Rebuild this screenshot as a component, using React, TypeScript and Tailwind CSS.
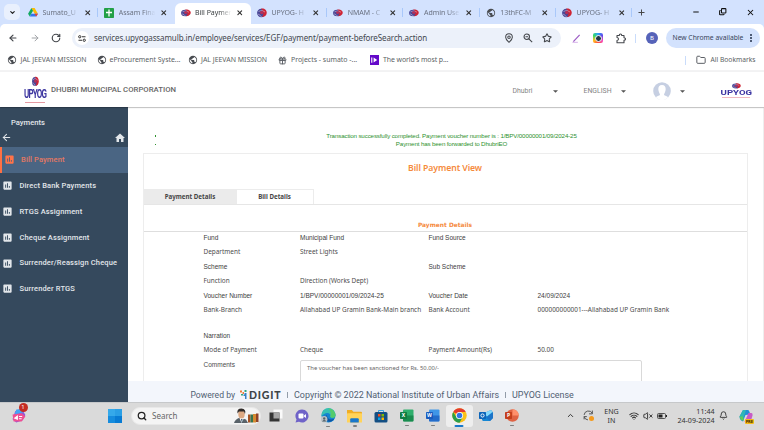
import React from 'react';
import {
  ArrowLeft, ArrowRight, RotateCw, ChevronDown, ChevronUp, X, Plus, Minus, Copy, Star, MapPin, ZoomOut,
  Folder, Search, Wifi, VolumeX, Bell, Gift,
} from 'lucide-react';
import { MdHome, MdAssessment, MdPublic } from 'react-icons/md';

const Emblem = ({ className }: { className: string }) => (
  <svg viewBox="0 0 20 20" preserveAspectRatio="none" className={className}>
    <circle cx="8.5" cy="10" r="8.3" fill="#4a4696" />
    <path d="M8 1.5C14 0 20 4 19.5 10C19 15 15 18 10 18C14 14 14 6 8 1.5Z" fill="#cf2434" />
    <path d="M3 7Q10 2 16 8M2 12Q7 14 9 18" stroke="#e9dbe8" strokeWidth="1" fill="none" />
    <circle cx="9.5" cy="9" r="3.4" fill="#b3305a" />
  </svg>
);

const Drive = () => (
  <svg viewBox="0 0 24 22" className="h-[9px] w-[10px]">
    <path d="M8 0H16L24 14H16Z" fill="#fbbc04" />
    <path d="M8 0L0 14L4 21L12 7Z" fill="#11a861" />
    <path d="M8 14H24L20 21H4Z" fill="#3477ed" />
    <path d="M20 21L16 14H24Z" fill="#ea4335" />
  </svg>
);

const Sheet = () => (
  <svg viewBox="0 0 20 20" className="size-[10px]">
    <rect width="20" height="20" rx="1.5" fill="#23a047" />
    <path d="M10 3V17M4 9H16" stroke="#fff" strokeWidth="2.6" />
  </svg>
);

const Globe = ({ className }: { className: string }) => <MdPublic className={className} />;

const tabs = [
  { icon: <Drive />, label: 'Sumato_U' },
  { icon: <Sheet />, label: 'Assam Fina' },
  { icon: <Emblem className="h-[8px] w-[10px]" />, label: 'Bill Paymer', active: true },
  { icon: <Emblem className="size-[10px]" />, label: 'UPYOG- H' },
  { icon: <Emblem className="h-[8px] w-[10px]" />, label: 'NMAM - C' },
  { icon: <Emblem className="h-[8px] w-[10px]" />, label: 'Admin Use' },
  { icon: <Globe className="size-[10px] text-[#4a4d52]" />, label: '13thFC-M' },
  { icon: <Emblem className="size-[10px]" />, label: 'UPYOG- H' },
];

function TabStrip() {
  return (
    <div className="flex h-6 items-end bg-[#d3e2fe]">
      <div className="mb-[4px] ml-[4px] mr-[2px] flex size-4 items-center justify-center rounded-[5px] bg-[#e9f0fd]">
        <ChevronDown className="size-[7px] text-[#222]" strokeWidth={4} />
      </div>
      {tabs.map((t, i) => (
        <div
          key={i}
          className={
            'flex h-[21px] w-[76.3px] shrink-0 items-center pb-[2px] pl-[6px] ' +
            (t.active ? 'rounded-t-[6px] bg-white text-[#3c4043]' : 'text-[#6a7180]')
          }
        >
          <div className="flex w-[14.5px] shrink-0">{t.icon}</div>
          <div className="w-[37px] shrink-0 text-[7px] leading-[12px] tracking-[-0.05px] whitespace-nowrap [mask-image:linear-gradient(to_right,#000_65%,transparent_98%)]">
            {t.label}
          </div>
          <X className="ml-[4px] size-[7.5px] shrink-0 text-[#333]" strokeWidth={3.6} />
          <div className={'ml-auto h-[9px] w-px ' + (i === 1 || i === 2 ? 'bg-transparent' : 'bg-[#a9c8fa]')} />
        </div>
      ))}
      <Plus className="mb-[7.5px] ml-[5px] size-[9px] text-[#444]" strokeWidth={2.6} />
      <div className="mb-[7.5px] ml-auto mr-[9.5px] flex items-center gap-[19px] text-[#111]">
        <Minus className="size-[8px]" strokeWidth={3} />
        <Copy className="size-[7.5px] -scale-x-100 rotate-180" strokeWidth={3.4} />
        <X className="size-[9px]" strokeWidth={2.8} />
      </div>
    </div>
  );
}

function Toolbar() {
  return (
    <div className="bg-[#d3e2fe]">
      <div className="flex h-[28px] items-center rounded-t-[5px] bg-white text-[#44474c]">
        <ArrowLeft className="ml-[8px] size-[10px]" strokeWidth={2.8} />
        <ArrowRight className="ml-[12px] size-[10px] text-[#a0a3a7]" strokeWidth={2.4} />
        <RotateCw className="ml-[11px] size-[10px]" strokeWidth={2.8} />
        <div className="ml-[11px] flex h-5 w-[489px] shrink-0 items-center rounded-full bg-[#ecf1fa] pl-[3px]">
          <div className="flex size-[14px] items-center justify-center rounded-full bg-white">
            <svg viewBox="0 0 16 14" className="h-[7px] w-[8px]" fill="none" stroke="#333" strokeWidth="2">
              <circle cx="3.5" cy="3.5" r="2.3" /><path d="M8 3.5H15M1 10.5H8" /><circle cx="12.5" cy="10.5" r="2.3" />
            </svg>
          </div>
          <span className="ml-[5px] text-[8px] tracking-[-0.1px] whitespace-nowrap text-[#43474e]">
            services.upyogassamulb.in/employee/services/EGF/payment/payment-beforeSearch.action
          </span>
          <div className="ml-auto mr-[9px] flex gap-[9px]">
            <MapPin className="size-[10px]" strokeWidth={2.5} />
            <svg viewBox="0 0 24 24" className="size-[10px]" fill="none" stroke="currentColor" strokeWidth="2.6">
              <circle cx="9" cy="9" r="6.5" /><path d="M6 9H12M14 14L22 22" />
            </svg>
            <Star className="size-[10px]" strokeWidth={2.5} />
          </div>
        </div>
        <svg viewBox="0 0 20 20" className="ml-[11px] size-[9px]">
          <path d="M3 17L17 2" stroke="#9a58c4" strokeWidth="2.6" />
          <path d="M1 18.5H13" stroke="#d0a7e6" strokeWidth="2" />
        </svg>
        <div className="ml-[12px] flex size-[10px] items-center justify-center rounded-[2px] bg-[conic-gradient(#2aa5ff,#6148e8,#f34cc4,#ff4b3b,#ffc21d,#35d96a,#2aa5ff)]">
          <div className="size-[7px] rounded-full border border-white bg-[#243746]" />
        </div>
        <svg viewBox="0 0 22 22" className="ml-[11.5px] size-[11px]" fill="none" stroke="#44474c" strokeWidth="2.2">
          <path d="M4 5H8.500Q8.500 2 11 2Q13.500 2 13.500 5H18V9.500Q21 10 21 12Q21 14 18 14.500V19.500H4V15Q7 14.500 7 12Q7 9.500 4 9Z" strokeLinejoin="round" />
        </svg>
        <div className="ml-[9.500px] h-[9px] w-px bg-[#c9dcfb]" />
        <div className="ml-[10px] flex size-[12px] items-center justify-center rounded-full bg-[#5663b9] text-[6px] text-white">B</div>
        <div className="ml-[7.500px] flex h-5 w-[94px] items-center rounded-full bg-[#d3e2fd] pl-[7px] text-[#38445a]">
          <span className="text-[6.750px] whitespace-nowrap">New Chrome available</span>
          <div className="ml-[6.500px] flex flex-col gap-[1.500px]">
            <i className="size-[1.700px] rounded-full bg-[#222f48]" />
            <i className="size-[1.700px] rounded-full bg-[#222f48]" />
            <i className="size-[1.700px] rounded-full bg-[#222f48]" />
          </div>
        </div>
      </div>
    </div>
  );
}

function Bookmarks() {
  return (
    <div className="flex h-[20px] items-center border-b-2 border-[#f3f3f4] bg-white pb-[2px] pl-[7px] text-[6.950px] whitespace-nowrap text-[#5b5f65]">
      <Globe className="size-[10px] text-[#4a4d52]" />
      <span className="ml-[3.500px] w-[76px]">JAL JEEVAN MISSION</span>
      <Globe className="size-[10px] text-[#4a4d52]" />
      <span className="ml-[3px] w-[78.500px]">eProcurement Syste...</span>
      <Globe className="size-[10px] text-[#4a4d52]" />
      <span className="ml-[3px] w-[77px]">JAL JEEVAN MISSION</span>
      <Gift className="size-[9px]" strokeWidth={2.5} />
      <span className="ml-[4px] w-[78.500px]">Projects - sumato -...</span>
      <div className="flex size-[9.500px] items-center justify-center bg-[#6409c9]">
        <svg viewBox="0 0 10 10" className="size-[8px]">
          <path d="M2.200 2V8.500" stroke="#fff" strokeWidth="1.400" />
          <path d="M4.500 2V8L9 5Z" fill="#fff" />
        </svg>
      </div>
      <span className="ml-[4px] tracking-[-0.080px]">The world's most p...</span>
      <div className="mr-[10px] ml-auto h-[9px] w-px bg-[#c9dcfb]" />
      <Folder className="size-[10px]" strokeWidth={2.4} />
      <span className="mr-[8.500px] ml-[4.500px] text-[6.700px]">All Bookmarks</span>
    </div>
  );
}

const Caret = ({ className }: { className: string }) => (
  <svg viewBox="0 0 10 5" className={className}><path d="M0 0H10L5 5Z" fill="#555" /></svg>
);

function AppHeader() {
  return (
    <div className="z-10 flex h-[35px] shrink-0 items-center bg-white font-['Roboto',sans-serif] shadow-[0_0.5px_1.5px_rgba(0,0,0,0.6)]">
      <div className="ml-[24px] flex w-[22px] flex-col items-center">
        <Emblem className="h-[11px] w-[7px]" />
        <span className="mt-[2px] origin-center scale-y-[1.650] text-[8px] leading-[12px] font-bold tracking-[-0.850px] text-[#3d36a0]">UPYOG</span>
        <div className="mt-px h-px w-[20px] bg-[#e59aa2]" />
      </div>
      <span className="ml-[5px] pt-[1px] text-[7.770px] font-medium whitespace-nowrap text-[#666]">DHUBRI MUNICIPAL CORPORATION</span>
      <div className="ml-auto flex items-center pt-[3px] text-[6.900px] text-[#858585]">
        <span className="w-[40px]">Dhubri</span>
        <Caret className="h-[3px] w-[5px]" />
        <span className="ml-[26px] w-[37px]">ENGLISH</span>
        <Caret className="h-[3px] w-[5px]" />
        <svg viewBox="0 0 18 18" className="ml-[27px] size-[18px]">
          <circle cx="9" cy="9" r="8.800" fill="#c6cfe2" />
          <path d="M9 3C5.500 3 5 6 5.500 8.500C6 11 7 11.500 7 13C6 14 4 14 2.800 15.300C6 19 12 19 15.200 15.300C14 14 12 14 11 13C11 11.500 12 11 12.500 8.500C13 6 12.500 3 9 3Z" fill="#fff" />
        </svg>
        <Caret className="ml-[9.500px] h-[3px] w-[5px]" />
      </div>
      <div className="mr-[12.500px] ml-[35.500px] flex w-[31px] flex-col items-center pt-px">
        <Emblem className="h-[6px] w-[9px]" />
        <span className="scale-x-[1.280] text-[7.500px] leading-[7px] font-bold text-[#3b34a2]">UPYOG</span>
        <div className="mt-px h-px w-[28px] bg-[#f0b9c1]" />
      </div>
    </div>
  );
}

const menu = ['Bill Payment', 'Direct Bank Payments', 'RTGS Assignment', 'Cheque Assignment', 'Surrender/Reassign Cheque', 'Surrender RTGS'];

function Sidebar() {
  return (
    <div className="flex w-[127.500px] shrink-0 flex-col bg-[#35495d] font-['Roboto',sans-serif] text-[7.500px] font-medium text-[#e2e6ea]">
      <div className="pt-[11px] pl-[11px] text-[7.600px] leading-[10px]">Payments</div>
      <div className="flex h-[19px] items-center justify-between pr-[1.500px] pl-[1px]">
        <ArrowLeft className="size-[11px]" strokeWidth={2.300} />
        <MdHome className="size-[12px]" />
      </div>
      {menu.map((m, i) => (
        <div
          key={m}
          className={
            'flex h-[25.800px] items-center tracking-[0.140px] whitespace-nowrap ' +
            (i === 0 ? 'border-l-2 border-[#ff7043] bg-[#4a6583] pl-[1.500px] text-[#e47862]' : 'pl-[2px]')
          }
        >
          <MdAssessment className={'mr-[6.500px] size-[11px] ' + (i === 0 ? 'text-[#ff7349]' : 'text-[#e2e6ea]')} />
          {m}
        </div>
      ))}
    </div>
  );
}

const rows: { cells: [string, string, string, string]; arial: boolean; tall?: boolean }[] = [
  { cells: ['Fund', 'Municipal Fund', 'Fund Source', ''], arial: true },
  { cells: ['Department', 'Street Lights', '', ''], arial: false },
  { cells: ['Scheme', '', 'Sub Scheme', ''], arial: true },
  { cells: ['Function', 'Direction (Works Dept)', '', ''], arial: false },
  { cells: ['Voucher Number', '1/BPV/00000001/09/2024-25', 'Voucher Date', '24/09/2024'], arial: true },
  { cells: ['Bank-Branch', 'Allahabad UP Gramin Bank-Main branch', 'Bank Account', '000000000001---Allahabad UP Gramin Bank'], arial: false, tall: true },
  { cells: ['Narration', '', '', ''], arial: true },
  { cells: ['Mode of Payment', 'Cheque', 'Payment Amount(Rs)', '50.00'], arial: false },
];

function Content() {
  return (
    <div className="flex min-h-0 flex-1 flex-col overflow-hidden border-r border-[#eeeeee] bg-white">
      <ul className="ml-[27px] pt-[24.500px] pr-[24px] text-center font-['Liberation_Sans',sans-serif] text-[6.200px] leading-[8.600px] tracking-[-0.140px] text-[#2e912e]">
        {['Transaction successfully completed. Payment voucher number is : 1/BPV/00000001/09/2024-25', 'Payment has been forwarded to DhubriEO'].map((s) => (
          <li key={s} className="flex items-center">
            <i className="size-[1.500px] bg-[#2e912e]" />
            <span className="flex-1 pl-[8px]">{s}</span>
          </li>
        ))}
      </ul>
      <div className="mt-[4.800px] mr-[15.500px] ml-[15px] flex flex-1 flex-col border border-b-0 border-[#ededed]">
        <div className="h-[34.300px] shrink-0 pt-[8px] text-center text-[8.700px] leading-[13px] font-semibold tracking-[-0.080px] text-[#f58a3c]">Bill Payment View</div>
        <div className="flex h-[16px] shrink-0 border-b border-[#e6e6e6] text-[6.200px] leading-[15px] font-bold text-[#444]">
          <div className="w-[93px] bg-[#ebebeb] text-center">Payment Details</div>
          <div className="w-[77px] border-t border-r border-[#ececec] text-center leading-[14px]">Bill Details</div>
        </div>
        <div className="h-[27px] shrink-0 border-b border-[#dedede] pt-[15.500px] text-center font-['DejaVu_Sans',sans-serif] text-[5.900px] leading-[10px] font-bold text-[#f58a3c]">
          Payment Details
        </div>
        <div className="flex flex-col pl-[60px] text-[#4c4c4c]">
          {rows.map((r) => (
            <div
              key={r.cells[0]}
              className={
                'grid grid-cols-[96.500px_128.500px_109px_1fr] whitespace-nowrap ' +
                (r.tall ? 'h-[25.400px] ' : 'h-[14.500px] ') +
                (r.arial ? "font-['Liberation_Sans',sans-serif] text-[6.500px] leading-[11px] text-[#3c3c3c]" : 'text-[6.430px] leading-[12px]')
              }
            >
              {r.cells.map((c, i) => <span key={i}>{c}</span>)}
            </div>
          ))}
          <div className="grid grid-cols-[96.500px_342px] text-[6.500px] leading-[12px]">
            <span className="font-['Liberation_Sans',sans-serif] leading-[11px]">Comments</span>
            <div className="mt-[1px] h-[40px] rounded-t-[2px] border border-[#d9d9d9] pt-[1.500px] pl-[6px] text-[5.870px] text-[#666]">
              The voucher has been sanctioned for Rs. 50.00/-
            </div>
          </div>
        </div>
      </div>
    </div>
  );
}

function Footer() {
  return (
    <div className="flex h-[21px] shrink-0 items-center bg-[#f3f6fc] pt-[8px] pl-[63px] font-['Roboto',sans-serif] text-[8.930px] leading-[11px] whitespace-nowrap text-[#506072]">
      <span className="text-[8.600px]">Powered by</span>
      <svg viewBox="0 0 14 18" className="mb-px ml-[5px] h-[9px] w-[7px]">
        <path d="M0 1H4V5H0ZM5 4H8V8H5Z" fill="#ee7b37" />
        <path d="M9 0H13V4H9ZM2 8H6V11H2Z" fill="#31a87f" />
        <path d="M9 6H13V18H10V12H7V9H9Z" fill="#3681c7" />
      </svg>
      <span className="mb-px ml-[2px] font-['Lato',sans-serif] text-[10.500px] leading-[10px] font-black tracking-[0.850px] text-[#3e4448]">DIGIT</span>
      <i className="mr-[6px] ml-[5.500px] h-[6px] w-px bg-[#929ca8]" />
      <span>Copyright © 2022 National Institute of Urban Affairs</span>
      <i className="mx-[6px] h-[6px] w-px bg-[#929ca8]" />
      <span>UPYOG License</span>
    </div>
  );
}

const Office = ({ letter, dark, light }: { letter: string; dark: string; light: string }) => (
  <svg viewBox="0 0 28 26" className="h-[13px] w-[14px]">
    {letter === 'P' ? (
      <><circle cx="15" cy="13" r="12.500" fill={light} /><path d="M15 .5A12.500 12.500 0 0 1 27.500 13H15Z" fill="#ff8f6b" /></>
    ) : (
      <><rect x="6" y="1" width="21" height="24" rx="2" fill={light} /><path d="M6 13H27V23Q27 25 25 25H8Q6 25 6 23Z" fill={dark} opacity=".7" /></>
    )}
    <rect x="0" y="6" width="14" height="14" rx="1.500" fill={dark} />
    <text x="7" y="16.500" textAnchor="middle" fontSize="10" fontWeight="700" fill="#fff">{letter}</text>
  </svg>
);

const WinLogo = () => (
  <div className="grid size-[14px] grid-cols-2 gap-[0.500px]">
    <i className="bg-[#35a9ea]" /><i className="bg-[#2a9fe5]" /><i className="bg-[#168cdd]" /><i className="bg-[#087bd3]" />
  </div>
);

const TaskView = () => (
  <svg viewBox="0 0 28 26" className="h-[13px] w-[14px]">
    <rect x="9" y="1" width="18" height="18" fill="#fafafa" />
    <rect x="1" y="7" width="20" height="18" fill="#343434" />
    <rect x="9" y="7" width="12" height="12" fill="#a5a5a5" />
  </svg>
);

const Chat = () => (
  <svg viewBox="0 0 28 28" className="size-[14px]">
    <path d="M14 1A13 13 0 1 1 8 25.500L1 27L3 21A13 13 0 0 1 14 1Z" fill="#6f63c8" />
    <rect x="7" y="9" width="10" height="10" rx="2" fill="#fff" /><path d="M18 13L22 10V18L18 15Z" fill="#fff" />
  </svg>
);

const Edge = () => (
  <svg viewBox="0 0 28 28" className="size-[15px]">
    <circle cx="14" cy="14" r="13" fill="#1584cf" />
    <path d="M1 13A13 13 0 0 1 27 13C27 20 18 19 17 16C20 12 13 7 6 11Q3 12 1 16Z" fill="#37c0b2" />
    <path d="M14 1A13 13 0 0 1 27 13C27 20 18 19 17 16C20 12 18 6 14 1Z" fill="#55cb6b" />
    <path d="M11 13C11 21 18 23 25 20C20 28 10 27 8 20Q7 15 11 13Z" fill="#0d56a5" />
    <circle cx="6" cy="21" r="6" fill="#b9c2c7" /><circle cx="6" cy="19.500" r="2.200" fill="#54636b" /><path d="M2 25Q6 20 10 25Z" fill="#54636b" />
  </svg>
);

const Files = () => (
  <svg viewBox="0 0 28 26" className="h-[14px] w-[15px]">
    <path d="M0 2H9L12 5H26Q28 5 28 7V24H0Z" fill="#f0ad23" />
    <rect x="0" y="8" width="28" height="17" rx="1" fill="#ffd35a" />
    <path d="M6 25V19Q6 17 8 17H20Q22 17 22 19V25Z" fill="#1777cb" />
  </svg>
);

const Store = () => (
  <svg viewBox="0 0 28 28" className="size-[14px]">
    <path d="M9 7V3H19V7" fill="none" stroke="#3aa3df" strokeWidth="2" />
    <rect x="1" y="6" width="26" height="21" rx="3" fill="#144f83" />
    <path d="M8 10H13V15H8Z" fill="#f25022" /><path d="M15 10H20V15H15Z" fill="#7fba00" />
    <path d="M8 17H13V22H8Z" fill="#00a4ef" /><path d="M15 17H20V22H15Z" fill="#ffb900" />
  </svg>
);

const ChromeLogo = () => (
  <svg viewBox="0 0 28 28" className="size-[15px]">
    <circle cx="14" cy="14" r="13.500" fill="#fbc116" />
    <path d="M14 14L2.300 7.250A13.500 13.500 0 0 1 25.700 7.250H14Z" fill="#e33b2e" />
    <path d="M2.300 7.250A13.500 13.500 0 0 0 14 27.500L19.800 17.500L14 14L8 17Z" fill="#2a9d4a" />
    <circle cx="14" cy="14" r="6.700" fill="#fff" /><circle cx="14" cy="14" r="5.200" fill="#3276e4" />
  </svg>
);

const Outlook = () => (
  <svg viewBox="0 0 28 26" className="h-[13px] w-[14px]">
    <path d="M6 10L24 2L28 7V18L22 24H8L6 22Z" fill="#1687d4" />
    <path d="M10 8L24 2L27 6L16 15Z" fill="#86d8fa" /><path d="M28 7V18L22 24L14 17Z" fill="#1c74c8" />
    <rect x="0" y="6" width="14" height="14" rx="1.500" fill="#0b65ba" />
    <circle cx="7" cy="13" r="3.200" fill="none" stroke="#fff" strokeWidth="1.800" />
  </svg>
);

const apps = [
  { el: <TaskView /> }, { el: <Chat /> }, { el: <Edge />, open: true }, { el: <Files />, open: true }, { el: <Store /> },
  { el: <Office letter="X" dark="#107c41" light="#2fae6c" />, open: true },
  { el: <Office letter="W" dark="#185abd" light="#3f96e7" />, open: true },
  { el: <ChromeLogo />, active: true }, { el: <Outlook /> },
  { el: <Office letter="P" dark="#c43e1c" light="#df6243" />, open: true },
];

function Taskbar() {
  return (
    <div className="flex h-[28.500px] shrink-0 items-center border-t border-[#c6c8ca] bg-[#dadada] pb-px text-[#333]">
      <div className="relative ml-[12px] size-[15px]">
        <svg viewBox="0 0 28 28" className="size-[15px]">
          <path d="M6 6L18 1L25 13L20 23L8 27L1 21Z" fill="#8d59dc" />
          <path d="M8 3L18 2L20 9L5 12Z" fill="#45a4f4" />
          <path d="M1 12L18 10L25 16L18 25L3 25Z" fill="#ef4e92" />
          <path d="M5 19L10 15V21ZM13 16H19M13 20H18" stroke="#fff" strokeWidth="2" fill="#fff" />
        </svg>
        <div className="absolute -top-[5px] left-[6.500px] flex size-[9px] items-center justify-center rounded-full bg-[#c42b23] text-[6px] text-white">1</div>
      </div>
      <div className="ml-[81px]"><WinLogo /></div>
      <div className="ml-[9px] flex h-[18px] w-[130px] items-center rounded-full border border-[#e8e8e8] bg-[#f4f4f4] pl-[5px]">
        <Search className="size-[10px] text-[#222]" strokeWidth={3} />
        <span className="ml-[5px] text-[8px] text-[#666]">Search</span>
        <svg viewBox="0 0 52 32" className="ml-auto h-[16px] w-[26px]">
          <path d="M0 30Q2 22 12 19L24 23L28 30Z" fill="#596269" />
          <path d="M11 20L15 30L20 20Z" fill="#fff" /><path d="M14 22H17L16 30Z" fill="#2b4c68" />
          <ellipse cx="15" cy="12" rx="6.500" ry="9" fill="#dda983" />
          <path d="M7 11Q5 1 15 1Q25 2 22 12L20 7H10Z" fill="#302b29" />
          <path d="M28 13H33V29H28Z" fill="#a35325" /><path d="M33 13H38V29H33Z" fill="#37734e" />
          <path d="M38 12H44V29H38Z" fill="#d58a31" /><path d="M44 11H49V28H44Z" fill="#8e4229" />
        </svg>
      </div>
      <div className="ml-[2px] flex">
        {apps.map((a, i) => (
          <div key={i} className={'flex h-[22px] w-[26.200px] items-center justify-center ' + (a.active ? 'rounded-[3px] bg-[#eeeeee]' : '')}>
            <div className="relative">
              {a.el}
              {a.open && <i className="absolute -bottom-[4px] left-1/2 h-[1.500px] w-[4px] -translate-x-1/2 rounded-full bg-[#808080]" />}
              {a.active && <i className="absolute -bottom-[4px] left-1/2 h-[2px] w-[9px] -translate-x-1/2 rounded-full bg-[#1878ca]" />}
            </div>
          </div>
        ))}
      </div>
      <div className="mr-[11px] ml-auto flex items-center text-[7.100px] leading-[9px]">
        <ChevronUp className="size-[9px]" strokeWidth={2.600} />
        <div className="relative ml-[8.500px]">
          <svg viewBox="0 0 20 20" className="size-[11px]" fill="none" stroke="#555" strokeWidth="1.800">
            <path d="M2 9A8 8 0 0 1 17 6M17 1V7H11M2 12A8 8 0 0 0 9 18M2 17V12H7" />
          </svg>
          <i className="absolute right-0 bottom-0 size-[5px] rounded-full bg-[#f59a1c]" />
        </div>
        <div className="ml-[9.500px] w-[16px] text-center">ENG<br />IN</div>
        <Wifi className="ml-[9.500px] size-[10px]" strokeWidth={2.500} />
        <VolumeX className="ml-[4px] size-[10px]" strokeWidth={2.300} />
        <svg viewBox="0 0 20 12" className="ml-[4px] h-[6px] w-[10px]">
          <rect x="1" y="1" width="16" height="10" rx="2" fill="none" stroke="#444" strokeWidth="1.800" />
          <path d="M3 3H11V9H3ZM18 4H20V8H18Z" fill="#222" />
        </svg>
        <div className="ml-[9px] w-[38.500px] text-right whitespace-nowrap">11:44<br />24-09-2024</div>
        <Bell className="ml-[4.500px] size-[9px]" strokeWidth={2.400} />
        <div className="relative ml-[11px]">
          <svg viewBox="0 0 28 28" className="size-[14px]">
            <path d="M8 2H18Q20 2 21 6L23 11L13 12L8 25Q1 22 1 15Z" fill="#238fd6" />
            <path d="M8 2H14L9 17L1 15Z" fill="#2fb7b6" /><path d="M19 8H25Q28 8 27 13L23 26H11Z" fill="#c85bc5" />
            <path d="M1 15H8L10 23H7Q3 23 1 15Z" fill="#5fcf5a" />
          </svg>
          <span className="absolute -right-px -bottom-px rounded-[1px] bg-[#f4bb18] px-[1px] text-[4px] leading-[5px] font-bold text-[#332500]">PRE</span>
        </div>
      </div>
    </div>
  );
}

export default function App() {
  return (
    <div className="flex h-[430px] w-[764px] flex-col overflow-hidden bg-white font-['Noto_Sans',sans-serif]">
      <TabStrip />
      <Toolbar />
      <Bookmarks />
      <AppHeader />
      <div className="flex min-h-0 flex-1">
        <Sidebar />
        <div className="flex min-w-0 flex-1 flex-col">
          <Content />
          <Footer />
        </div>
      </div>
      <Taskbar />
    </div>
  );
}
